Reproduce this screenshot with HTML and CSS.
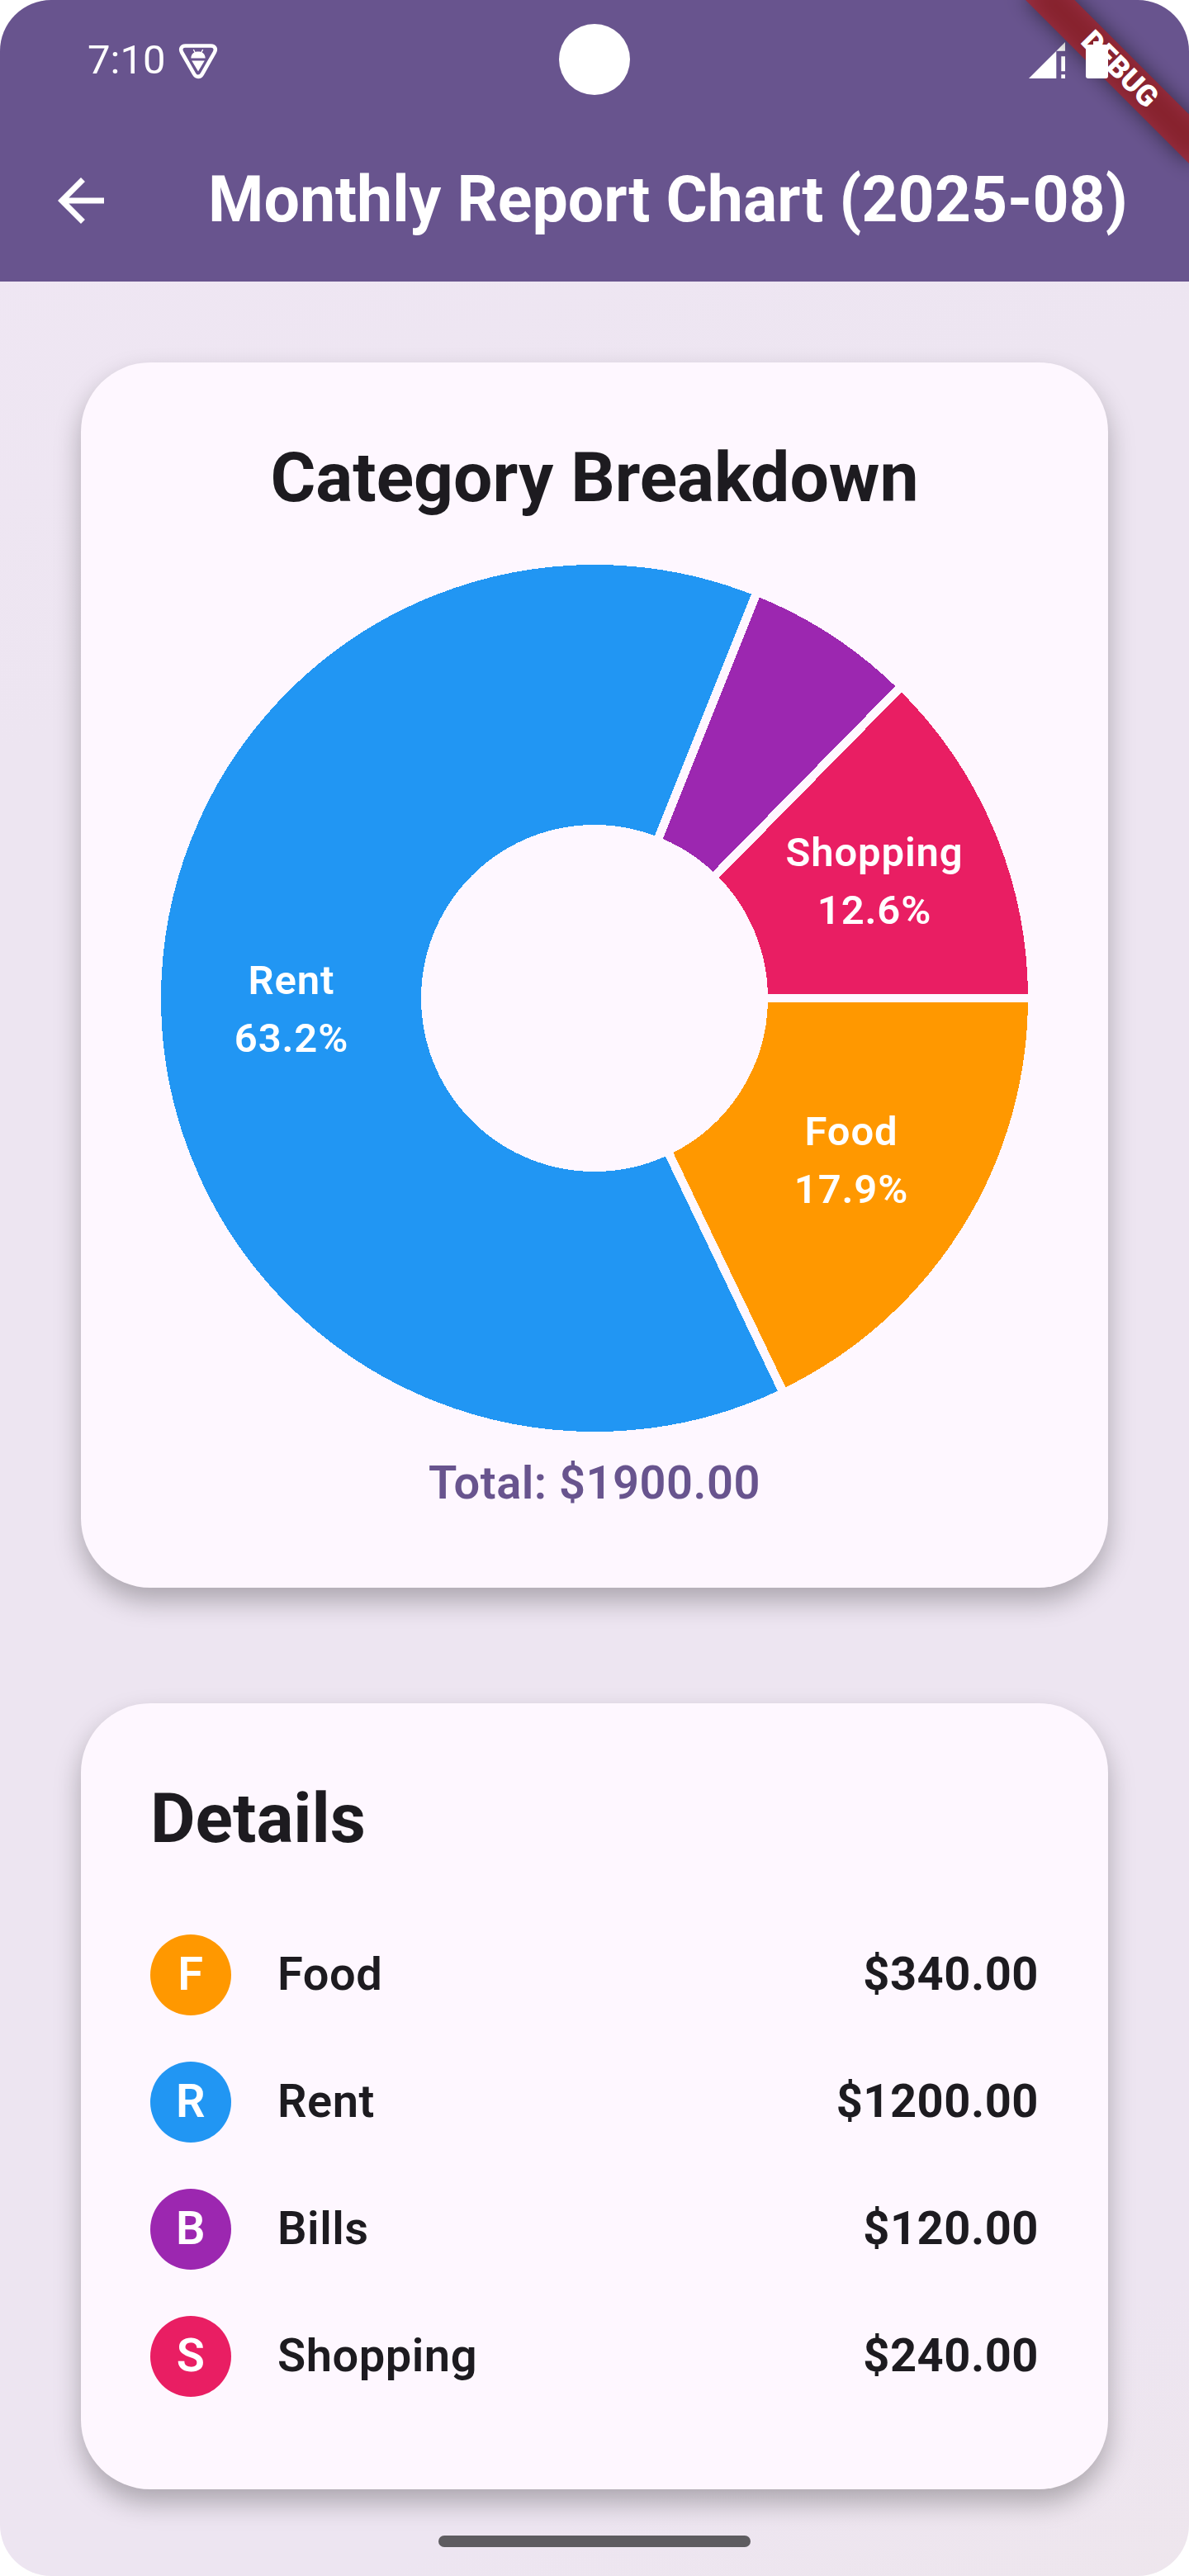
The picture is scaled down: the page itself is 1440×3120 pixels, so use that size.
FILE: index.html
```html
<!DOCTYPE html>
<html lang="en">
<head>
<meta charset="utf-8">
<title>Monthly Report Chart</title>
<link rel="stylesheet" href="styles.css">
</head>
<body>
<div class="screen">
  <header class="header">
    <div class="status">
      <span class="time">7:10</span>
      <svg class="shield" viewBox="0 0 48 44" width="48" height="44">
        <path d="M8.500 3.500H39.500C44.500 3.500 46 7.500 43.800 11.500L29 37.500C26.500 42 21.500 42 19 37.500L4.200 11.500C2 7.500 3.500 3.500 8.500 3.500Z" fill="none" stroke="#fff" stroke-width="4.600"/>
        <path d="M15.300 18.500C15.600 13 19 10.500 24 10.500S32.400 13 32.700 18.500Z M16.200 21.500H31.800L24 34.500Z" fill="#fff"/>
        <path d="M18.300 8L20.500 12M29.700 8L27.500 12" stroke="#fff" stroke-width="1.400"/>
      </svg>
      <svg class="signal" viewBox="0 0 44 44" width="44" height="44" fill="#fff">
        <path d="M0 44L33.300 10.700V44Z M33.300 10.700L44 0V10.700Z"/>
        <path d="M39.300 17.300H44V35.300H39.300Z M39.300 39.300H44V44H39.300Z"/>
      </svg>
      <span class="battery"></span>
    </div>
    <div class="appbar">
      <svg class="back" viewBox="4 4 16 16" width="56" height="56" fill="#fff">
        <path d="M20 11H7.830l5.590-5.590L12 4l-8 8 8 8 1.410-1.410L7.830 13H20v-2z"/>
      </svg>
      <h1 class="title">Monthly Report Chart (2025-08)</h1>
    </div>
  </header>

  <main class="content">
    <section class="card">
      <h2 class="heading heading-center">Category Breakdown</h2>
      <svg class="chart" viewBox="-525 -525 1050 1050" width="1050" height="1050">
        <g class="slices">
          <circle class="slice stroke-food" r="367.5" pathLength="1900" stroke-dasharray="340 1560"/>
          <circle class="slice stroke-rent" r="367.5" pathLength="1900" stroke-dasharray="1200 700" stroke-dashoffset="-340"/>
          <circle class="slice stroke-bills" r="367.5" pathLength="1900" stroke-dasharray="120 1780" stroke-dashoffset="-1540"/>
          <circle class="slice stroke-shopping" r="367.5" pathLength="1900" stroke-dasharray="240 1660" stroke-dashoffset="-1660"/>
          <path class="gap" d="M190 0H535"/>
          <path class="gap" d="M190 0H535" transform="rotate(64.421)"/>
          <path class="gap" d="M190 0H535" transform="rotate(291.789)"/>
          <path class="gap" d="M190 0H535" transform="rotate(314.526)"/>
        </g>
        <g class="labels">
          <text x="-367" y="-5">Rent</text><text x="-367" y="65">63.2%</text>
          <text x="311" y="178">Food</text><text x="311" y="248">17.9%</text>
          <text x="339" y="-160">Shopping</text><text x="339" y="-90">12.6%</text>
        </g>
      </svg>
      <p class="total">Total: $1900.00</p>
    </section>

    <section class="card">
      <h2 class="heading">Details</h2>
      <ul class="rows">
        <li class="row"><span class="avatar food">F</span><span class="name">Food</span><span class="amount">$340.00</span></li>
        <li class="row"><span class="avatar rent">R</span><span class="name">Rent</span><span class="amount">$1200.00</span></li>
        <li class="row"><span class="avatar bills">B</span><span class="name">Bills</span><span class="amount">$120.00</span></li>
        <li class="row"><span class="avatar shopping">S</span><span class="name">Shopping</span><span class="amount">$240.00</span></li>
      </ul>
    </section>
  </main>

  <span class="camera"></span>
  <svg class="ribbon" viewBox="0 0 340 340" width="340" height="340">
    <defs><filter id="soft" x="-30%" y="-150%" width="160%" height="400%"><feGaussianBlur stdDeviation="12.6"/></filter></defs>
    <g transform="translate(340 0) rotate(45)">
      <rect x="-140" y="98" width="280" height="42" fill="#000" fill-opacity=".5" filter="url(#soft)"/>
      <rect x="-140" y="98" width="280" height="42" fill="#b71c1c" fill-opacity=".627"/>
      <text class="ribbon-text" x="0" y="130.300">DEBUG</text>
    </g>
  </svg>
  <span class="handle"></span>
</div>
</body>
</html>
```
FILE: styles.css
```css
* { box-sizing: border-box; }
body { margin: 0; background: #fff; font-family: Roboto, "Liberation Sans", sans-serif; }
h1, h2, p, ul { margin: 0; padding: 0; list-style: none; }
svg { display: block; flex: none; }

.screen {
  position: relative;
  width: 1440px;
  height: 3120px;
  border-radius: 62px;
  overflow: hidden;
  background: linear-gradient(160deg, #f0e7f4, #ede5f1 25%, #ede5f1 90%, #eee6ed);
  color: #1d1b20;
}

.header { height: 341px; background: #68548e; color: #fff; }
.status { display: flex; align-items: flex-start; height: 145px; padding: 51px 98px 0 106px; }
.time { width: 94px; font-size: 49px; line-height: 44px; white-space: nowrap; }
.shield { margin: 1px 0 0 16px; }
.signal { margin-left: auto; }
.battery { position: relative; z-index: 2; width: 27px; height: 41px; margin: 3px 0 0 25px; border-radius: 3px; background: #fff; }
.battery::before { content: ""; position: absolute; top: -4px; left: 9px; width: 9px; height: 5px; background: #fff; }
.appbar { display: flex; align-items: center; height: 196px; padding-left: 70px; }
.title { margin-left: 126px; padding-bottom: 3px; font-size: 77px; font-weight: 700; line-height: 98px; white-space: nowrap; }

.content { display: flex; flex-direction: column; gap: 140px; padding: 98px; }
.card {
  padding: 84px;
  border-radius: 84px;
  background: #fef7ff;
  box-shadow: 0 16px 32px rgba(0, 0, 0, .28);
}
.heading { font-size: 84px; font-weight: 700; line-height: 112px; }
.heading-center { text-align: center; }

.chart { margin: 49px 0 20px 13px; overflow: visible; }
.slices { shape-rendering: crispEdges; }
.slice { fill: none; stroke-width: 315; }
.stroke-food { stroke: #ff9800; }
.stroke-rent { stroke: #2196f3; }
.stroke-bills { stroke: #9c27b0; }
.stroke-shopping { stroke: #e91e63; }
.gap { stroke: #fef7ff; stroke-width: 10.5; }
.labels { fill: #fff; font-size: 49px; font-weight: 600; letter-spacing: .875px; text-anchor: middle; }
.total { padding-bottom: 1px; text-align: center; font-size: 56px; font-weight: 600; line-height: 84px; letter-spacing: .525px; color: #68548e; }

.rows { margin-top: 56px; }
.row { display: flex; align-items: center; height: 154px; font-size: 56px; line-height: 84px; letter-spacing: .525px; }
.avatar {
  display: flex;
  align-items: center;
  justify-content: center;
  width: 98px;
  height: 98px;
  margin-right: 56px;
  padding-bottom: 2px;
  border-radius: 50%;
  color: #fff;
  font-weight: 600;
}
.food { background: #ff9800; }
.rent { background: #2196f3; }
.bills { background: #9c27b0; }
.shopping { background: #e91e63; }
.name { flex: 1; padding-bottom: 2px; font-weight: 600; }
.amount { padding-bottom: 2px; font-weight: 700; }

.camera { position: absolute; top: 29px; left: 677px; width: 86px; height: 86px; border-radius: 50%; background: #fff; }
.ribbon { position: absolute; top: 0; right: 0; z-index: 1; }
.ribbon-text { fill: #fff; font-size: 35.7px; font-weight: 900; text-anchor: middle; }
.handle { position: absolute; left: 531px; top: 3071px; width: 378px; height: 14px; border-radius: 7px; background: #5e5c60; }
```
